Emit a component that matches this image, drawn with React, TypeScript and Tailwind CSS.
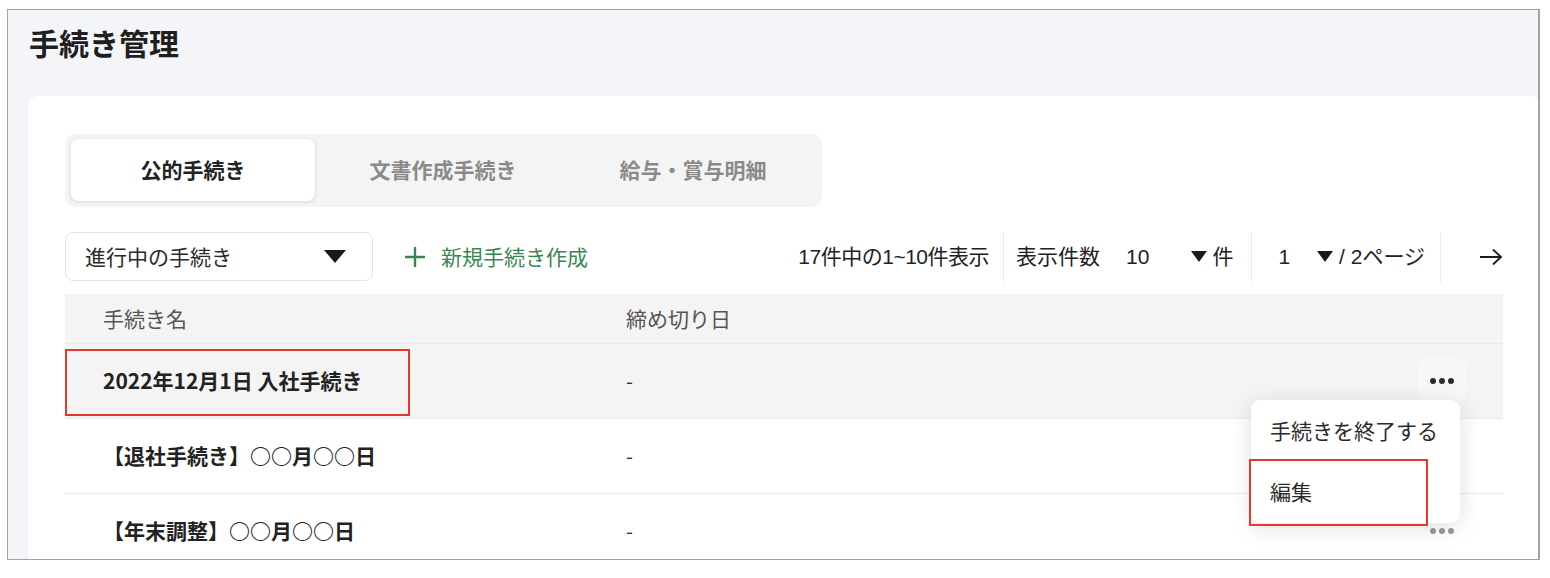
import React from "react";

const JP = { fontFamily: '"Noto Sans CJK JP", "Noto Sans", sans-serif' };
const NUM = { fontFamily: '"Liberation Sans", "Noto Sans CJK JP", sans-serif' };

const TABS = ["公的手続き", "文書作成手続き", "給与・賞与明細"];

const ROWS = [
  { name: "2022年12月1日 入社手続き", deadline: "-", active: true },
  { name: "【退社手続き】○○月○○日", deadline: "-", active: false },
  { name: "【年末調整】○○月○○日", deadline: "-", active: false },
];

function Triangle({ w, h }: { w: number; h: number }) {
  return (
    <svg width={w} height={h} viewBox={`0 0 ${w} ${h}`}>
      <polygon points={`0,0 ${w},0 ${w / 2},${h}`} fill="#1a1a1a" />
    </svg>
  );
}

function Dots({ muted }: { muted?: boolean }) {
  const c = muted ? "bg-[#9a9a9a]" : "bg-[#2a2a2a]";
  return (
    <div className="flex items-center gap-[3px]">
      <span className={`w-[6px] h-[6px] rounded-full ${c}`} />
      <span className={`w-[6px] h-[6px] rounded-full ${c}`} />
      <span className={`w-[6px] h-[6px] rounded-full ${c}`} />
    </div>
  );
}

function Divider() {
  return <div className="w-px h-[50px] bg-[#ebebeb]" />;
}

export default function App() {
  return (
    <div className="w-[1550px] h-[578px] bg-white pt-[9px] pl-[7px]" style={JP}>
      <div className="w-[1533px] h-[551px] border border-r-2 border-[#a3a3a3] bg-[#f4f5f9] overflow-hidden flex flex-col">
        {/* Page title */}
        <div className="h-[86px] shrink-0 pl-[21px] pt-[13px]">
          <h1 className="text-[30px] leading-[38px] font-bold text-[#1f1f1f]">手続き管理</h1>
        </div>

        {/* Main card */}
        <div className="ml-[20px] flex-1 bg-white rounded-tl-[10px] rounded-tr-[6px] pl-[37px] pr-[35px] pt-[38px]">
          {/* Tabs */}
          <div className="w-[757px] h-[73px] bg-[#f4f4f4] rounded-[10px] p-[5px] pl-[6px] flex gap-[6px]">
            {TABS.map((t, i) => (
              <div
                key={t}
                className={
                  i === 0
                    ? "w-[244px] h-[62px] bg-white rounded-[8px] shadow-[0_1px_4px_rgba(0,0,0,0.12)] flex items-center justify-center text-[21px] font-bold text-[#222]"
                    : "w-[244px] h-[62px] flex items-center justify-center text-[21px] font-bold text-[#8a8a8a]"
                }
              >
                {t}
              </div>
            ))}
          </div>

          {/* Toolbar */}
          <div className="mt-[25px] h-[49px] flex items-center">
            <div className="w-[308px] h-[49px] border border-[#e3e3e3] rounded-[8px] flex items-center justify-between pl-[19px] pr-[26px]">
              <span className="text-[21px] text-[#2a2a2a]">進行中の手続き</span>
              <Triangle w={22} h={13} />
            </div>
            <div className="ml-[31px] flex items-center text-[#3a8653]">
              <svg width="22" height="22" viewBox="0 0 22 22">
                <path d="M11 1v20M1 11h20" stroke="#3a8653" strokeWidth="2.4" />
              </svg>
              <span className="ml-[15px] text-[21px]">新規手続き作成</span>
            </div>

            <div className="ml-auto flex items-center text-[21px] text-[#222]" style={NUM}>
              <span className="tracking-[-0.5px]">17件中の1~10件表示</span>
              <div className="ml-[14px]">
                <Divider />
              </div>
              <span className="ml-[12px]">表示件数</span>
              <span className="ml-[26px]">10</span>
              <span className="ml-[42px]">
                <Triangle w={16} h={11} />
              </span>
              <span className="ml-[5px]">件</span>
              <div className="ml-[18px]">
                <Divider />
              </div>
              <span className="ml-[26px]">1</span>
              <span className="ml-[27px]">
                <Triangle w={16} h={11} />
              </span>
              <span className="ml-[6px]">/ 2ページ</span>
              <div className="ml-[15px]">
                <Divider />
              </div>
              <svg className="ml-[38px]" width="24" height="18" viewBox="0 0 24 18">
                <path d="M1 9h21M14 1.5L22 9l-8 7.5" stroke="#1a1a1a" strokeWidth="1.8" fill="none" />
              </svg>
            </div>
          </div>

          {/* Table */}
          <div className="mt-[13px]">
            <div className="h-[50px] bg-[#f4f4f4] border-b border-[#ebebeb] flex items-center text-[21px] text-[#555]">
              <div className="w-[561px] pl-[38px]">手続き名</div>
              <div>締め切り日</div>
            </div>

            {ROWS.map((row) => (
              <div
                key={row.name}
                className={
                  row.active
                    ? "relative z-10 h-[75px] bg-[#f4f4f4] border-b border-[#ebebeb] flex items-center"
                    : "relative h-[75px] bg-white border-b border-[#ebebeb] flex items-center"
                }
              >
                <div className="w-[561px] pl-[38px] text-[21px] font-bold text-[#222]">{row.name}</div>
                <div className="flex-1 text-[20px] text-[#333]">{row.deadline}</div>
                <div
                  className={
                    row.active
                      ? "w-[48px] h-[46px] mr-[37px] rounded-[6px] bg-[#f7f7fa] flex items-center justify-center"
                      : "w-[48px] h-[46px] mr-[37px] flex items-center justify-center"
                  }
                >
                  <Dots muted={!row.active} />
                </div>

                {/* highlight box */}
                {row.active && (
                  <div className="absolute left-0 top-[5px] w-[345px] h-[67px] border-2 border-[#e6392e]" />
                )}

                {/* dropdown menu */}
                {row.active && (
                  <div className="absolute right-[43px] top-[56px] w-[209px] h-[123px] bg-white rounded-[9px] shadow-[0_4px_22px_rgba(0,0,0,0.13)]">
                    <div className="h-[61px] flex items-center pl-[19px] text-[21px] text-[#2a2a2a]">
                      手続きを終了する
                    </div>
                    <div className="h-[62px] flex items-center pl-[19px] text-[21px] text-[#2a2a2a]">編集</div>
                    <div className="absolute left-[-2px] top-[59px] w-[179px] h-[67px] border-2 border-[#e6392e]" />
                  </div>
                )}
              </div>
            ))}
          </div>
        </div>
      </div>
    </div>
  );
}
